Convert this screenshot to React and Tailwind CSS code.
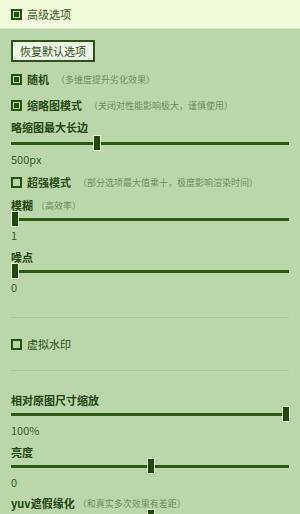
const FONT = { fontFamily: '"Noto Sans CJK SC", "Noto Sans", sans-serif' };

const Check = ({ checked }) => (
  <span className="w-[11px] h-[11px] border-2 border-[#24520f] flex items-center justify-center shrink-0 bg-[#bbd7a9]">
    {checked && <span className="w-[5px] h-[5px] bg-[#24520f]" />}
  </span>
);

const CheckRow = ({ checked, label, hint, bold, className = "" }) => (
  <div className={`h-[16px] flex items-center gap-[5px] ${className}`}>
    <Check checked={checked} />
    <span className={`text-[11px] leading-none text-[#2b4c16] ${bold ? "font-bold" : ""}`}>{label}</span>
    {hint && <span className="text-[9px] leading-none text-[#6e8d5c] ml-[2px]">{hint}</span>}
  </div>
);

const Slider = ({ offset }) => (
  <div className="h-[16px] relative flex items-center">
    <div className="w-full h-[3px] bg-[#2c5c14]" />
    <div
      className="absolute top-0 w-[8px] h-[16px] bg-[#1f4a0b] border border-[#eaf5dc]"
      style={{ left: offset }}
    />
  </div>
);

const Label = ({ text, hint, className = "" }) => (
  <div className={`h-[12px] flex items-center ${className}`}>
    <span className="text-[11px] leading-none font-bold text-[#24450f]">{text}</span>
    {hint && <span className="text-[9px] leading-none text-[#6e8d5c] ml-[3px]">{hint}</span>}
  </div>
);

const Value = ({ text }) => (
  <div className="h-[16px] flex items-center text-[11px] leading-none text-[#3d5a2a]">{text}</div>
);

const Divider = ({ className = "" }) => <div className={`h-px bg-[#a9c797] ${className}`} />;

export default function App() {
  return (
    <div className="min-h-screen bg-[#bbd7a9]" style={FONT}>
      <div className="h-[29px] bg-[#f2fcdc] border-b border-[#d8ebc6] flex items-center gap-[5px] px-[11px]">
        <Check checked />
        <span className="text-[11px] leading-none text-[#3b5a28]">高级选项</span>
      </div>

      <div className="px-[11px] flex flex-col">
        <div className="mt-[11px] flex">
          <button className="h-[22px] px-[7px] border-2 border-[#2a5514] bg-[#eef7e6] text-[11px] leading-none text-[#2f4d1c]">
            恢复默认选项
          </button>
        </div>

        <CheckRow checked bold label="随机" hint="（多维度提升劣化效果）" className="mt-[9px]" />
        <CheckRow checked bold label="缩略图模式" hint="（关闭对性能影响极大，谨慎使用）" className="mt-[10px]" />

        <Label text="略缩图最大长边" className="mt-[8px]" />
        <div className="mt-[2px]">
          <Slider offset={82} />
        </div>
        <Value text="500px" />

        <CheckRow bold label="超强模式" hint="（部分选项最大值乘十，极度影响渲染时间）" className="mt-[7px]" />

        <Label text="模糊" hint="（高效率）" className="mt-[9px]" />
        <Slider offset={0} />
        <Value text="1" />

        <Label text="噪点" className="mt-[8px]" />
        <Slider offset={0} />
        <Value text="0" />

        <Divider className="mt-[22px]" />

        <CheckRow label="虚拟水印" className="mt-[18px]" />

        <Divider className="mt-[18px]" />

        <Label text="相对原图尺寸缩放" className="mt-[23px]" />
        <Slider offset={271} />
        <Value text="100%" />

        <Label text="亮度" className="mt-[8px]" />
        <Slider offset={136} />
        <Value text="0" />

        <Label text="yuv遮假缘化" hint="（和真实多次效果有差距）" className="mt-[7px]" />
        <Slider offset={136} />
        <Value text="0" />
      </div>
    </div>
  );
}
